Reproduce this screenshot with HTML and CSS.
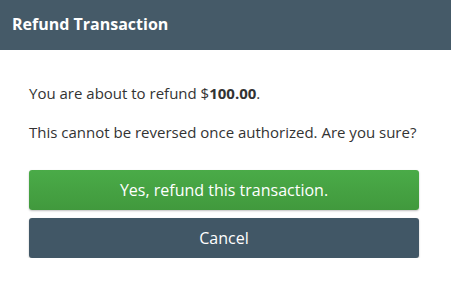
FILE: index.html
```html
<!DOCTYPE html>
<html>
<head>
<meta charset="utf-8">
<link rel="stylesheet" href="styles.css">
</head>
<body>
<div class="modal">
  <div class="header"><h1 class="title">Refund Transaction</h1></div>
  <div class="body">
    <p class="line">You are about to refund $<strong>100.00</strong>.</p>
    <p class="line">This cannot be reversed once authorized. Are you sure?</p>
    <div class="actions">
      <button class="btn btn-green">Yes, refund this transaction.</button>
      <button class="btn btn-dark">Cancel</button>
    </div>
  </div>
</div>
</body>
</html>
```
FILE: styles.css
```css
html, body {
  margin: 0;
  padding: 0;
  background: #ffffff;
}
body {
  font-family: "Open Sans", "Liberation Sans", sans-serif;
  color: #333333;
}
.modal {
  width: 451px;
}
.header {
  background: #455a68;
  height: 50px;
  display: flex;
  align-items: center;
  padding: 0 12px 2px;
  box-sizing: border-box;
}
.title {
  margin: 0;
  font-size: 16px;
  font-weight: 700;
  color: #ffffff;
}
.body {
  padding: 33px 32px 0 29px;
}
.line {
  margin: 0 0 19px 0;
  font-size: 15px;
  line-height: 20px;
}
.line strong {
  font-weight: 700;
}
.actions {
  display: flex;
  flex-direction: column;
  gap: 8px;
  margin-top: 28px;
  width: 390px;
}
.btn {
  height: 40px;
  border: none;
  border-radius: 3px;
  color: #ffffff;
  font-family: inherit;
  font-size: 16px;
  box-shadow: 0 1px 2px rgba(0,0,0,0.25);
  padding: 0;
}
.btn-green {
  background: linear-gradient(#4aab48, #41993d);
}
.btn-dark {
  background: #415766;
}
```
